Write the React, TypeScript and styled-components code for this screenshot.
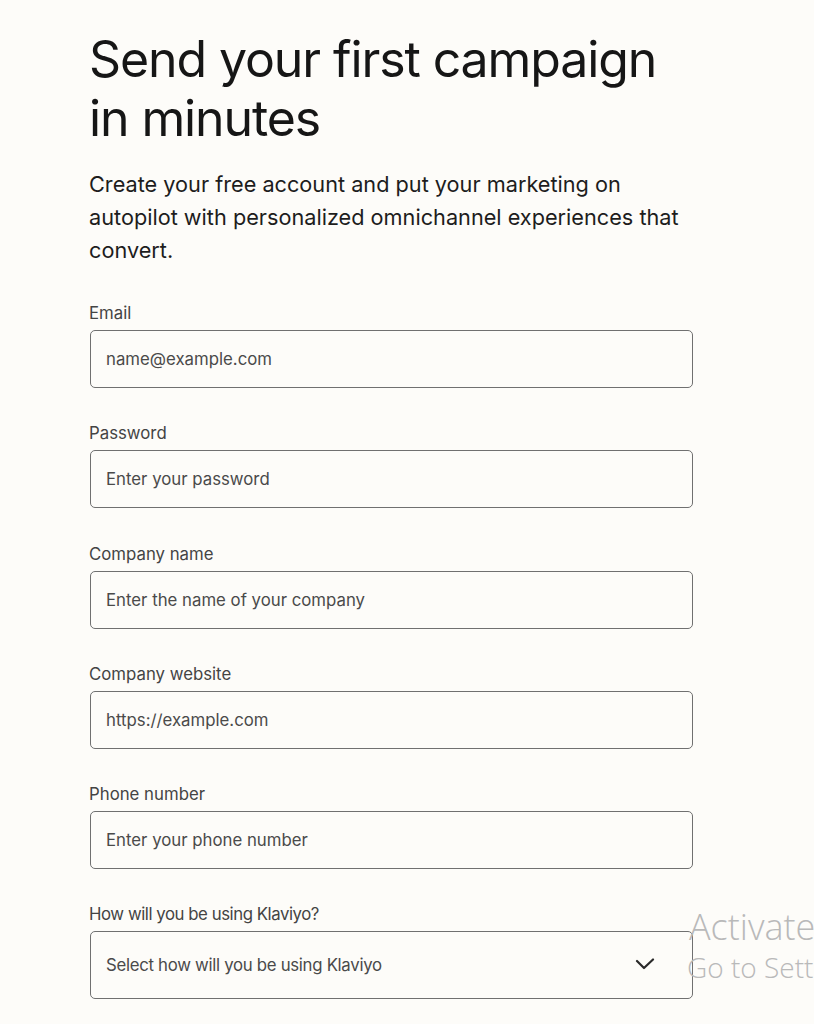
import React from "react";
import styled, { createGlobalStyle } from "styled-components";

const GlobalStyle = createGlobalStyle`
  html, body {
    margin: 0;
    padding: 0;
    background: #fdfcf9;
    overflow: hidden;
  }
  body {
    font-family: Inter, "Noto Sans", sans-serif;
    color: #1b1b1b;
  }
  * { box-sizing: border-box; }
`;

const Page = styled.div`
  position: relative;
  width: 814px;
  height: 1024px;
  padding: 30px 0 0 89px;
  background: #fdfcf9;
`;

const Column = styled.div`
  width: 604px;
  display: flex;
  flex-direction: column;
`;

const Title = styled.h1`
  margin: 0;
  font-family: Inter, sans-serif;
  font-weight: 400;
  font-size: 50px;
  line-height: 59px;
  letter-spacing: -1.1px;
  color: #161616;
`;

const Lead = styled.p`
  margin: 20px 0 0;
  font-size: 21.7px;
  line-height: 33px;
  letter-spacing: 0;
  color: #1d1d1d;
`;

const Form = styled.form`
  margin-top: 35px;
  display: flex;
  flex-direction: column;
  gap: 34.3px;
`;

const Field = styled.label`
  display: flex;
  flex-direction: column;
  gap: 6px;
`;

const LabelText = styled.span<{ $tight?: boolean }>`
  font-size: 16.8px;
  line-height: 22px;
  letter-spacing: ${(p) => (p.$tight ? "-0.45px" : "0")};
  color: #444;
`;

const Input = styled.input`
  width: 603px;
  height: 58px;
  margin-left: 1px;
  padding: 0 15px;
  border: 1px solid #707070;
  border-radius: 5px;
  background: #fdfcf9;
  font-family: Inter, sans-serif;
  font-size: 16.8px;
  color: #222;
  outline: none;
  &::placeholder {
    color: #4a4a4a;
  }
`;

const SelectBox = styled.div`
  width: 603px;
  height: 68px;
  margin-left: 1px;
  padding: 0 36px 0 15px;
  border: 1px solid #707070;
  border-radius: 5px;
  background: #fdfcf9;
  display: flex;
  align-items: center;
  justify-content: space-between;
  font-size: 16.8px;
  letter-spacing: -0.3px;
  color: #4a4a4a;
`;

const Watermark = styled.div`
  position: absolute;
  left: 689px;
  top: 903px;
  font-family: "Open Sans", "Noto Sans", sans-serif;
  font-weight: 300;
  color: #b9b9b9;
  white-space: nowrap;
  pointer-events: none;
`;

const WatermarkTitle = styled.div`
  font-size: 36px;
  line-height: 48px;
`;

const WatermarkSub = styled.div`
  font-size: 28px;
  line-height: 32px;
  margin-left: -2px;
`;

const Chevron = () => (
  <svg width="22" height="14" viewBox="0 0 22 14" fill="none">
    <polyline points="3,3 10,10 19,1.5" stroke="#2a2a2a" strokeWidth="2.2" strokeLinecap="round" strokeLinejoin="round" />
  </svg>
);

const fields = [
  { label: "Email", placeholder: "name@example.com", type: "email" },
  { label: "Password", placeholder: "Enter your password", type: "password" },
  { label: "Company name", placeholder: "Enter the name of your company", type: "text" },
  { label: "Company website", placeholder: "https://example.com", type: "text" },
  { label: "Phone number", placeholder: "Enter your phone number", type: "tel" },
];

export default function App() {
  return (
    <Page>
      <GlobalStyle />
      <Column>
        <Title>
          Send your first campaign
          <br />
          in minutes
        </Title>
        <Lead>
          Create your free account and put your marketing on autopilot with personalized omnichannel experiences that convert.
        </Lead>
        <Form onSubmit={(e) => e.preventDefault()}>
          {fields.map((f) => (
            <Field key={f.label}>
              <LabelText>{f.label}</LabelText>
              <Input type={f.type} placeholder={f.placeholder} />
            </Field>
          ))}
          <Field>
            <LabelText $tight>How will you be using Klaviyo?</LabelText>
            <SelectBox>
              <span>Select how will you be using Klaviyo</span>
              <Chevron />
            </SelectBox>
          </Field>
        </Form>
      </Column>
      <Watermark>
        <WatermarkTitle>Activate Windows</WatermarkTitle>
        <WatermarkSub>Go to Settings to activate Windows.</WatermarkSub>
      </Watermark>
    </Page>
  );
}
